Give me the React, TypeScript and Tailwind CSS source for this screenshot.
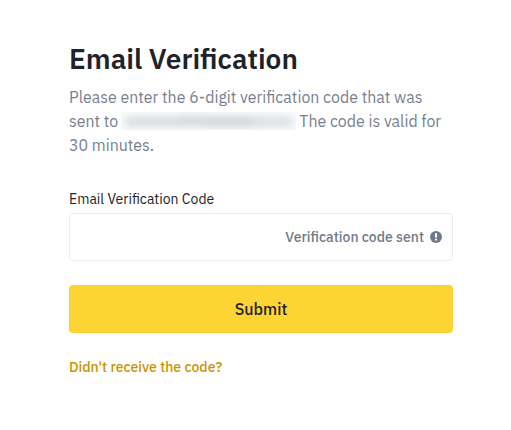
import React from 'react';

/**
 * Sizes and tints of the soft blocks that stand in for the hidden address
 */
const MASK_BLOCKS = [
  'h-[9px] w-[52px] bg-[#d3d6d9]',
  'h-[10px] w-[30px] bg-[#d1d4d8]',
  'h-[11px] w-[44px] bg-[#d0d3d7]',
  'h-[9px] w-[40px] bg-[#d6d9dc]',
];

/**
 * Blurred placeholder shown in place of the account's email address
 */
function MaskedEmail() {
  return (
    <span className="mx-[3px] inline-flex h-[18px] w-[175px] items-center overflow-hidden bg-[#fafbfb]">
      <span className="flex w-full items-center justify-center blur-[4px]">
        {MASK_BLOCKS.map((block) => (
          <span key={block} className={block} />
        ))}
      </span>
    </span>
  );
}

function NoticeIcon() {
  return (
    <svg className="h-3 w-3 shrink-0" viewBox="0 0 12 12" aria-hidden="true">
      <circle cx="6" cy="6" r="6" fill="#707a8a" />
      <path d="M5 2.2h2v4.4H5zM5 7.8h2v1.8H5z" fill="#fff" />
    </svg>
  );
}

export default function App() {
  return (
    <main className="min-h-[430px] bg-white pl-[69px] pt-[41px] font-['IBM_Plex_Sans',Roboto,sans-serif]">
      <form className="flex w-96 flex-col" onSubmit={(event) => event.preventDefault()}>
        <h1 className="whitespace-nowrap text-[28px] font-semibold leading-9 text-[#1e2329]">
          Email Verification
        </h1>

        <p className="mt-2 whitespace-nowrap text-[15.92px] leading-6 text-[#76808f]">
          <span className="block">Please enter the 6-digit verification code that was</span>
          <span className="flex items-center">
            <span>sent to</span>
            <MaskedEmail />
            <span>The code is valid for</span>
          </span>
          <span className="block">30 minutes.</span>
        </p>

        <label htmlFor="code" className="mt-[31px] text-sm leading-[22px] text-[#1e2329]">
          Email Verification Code
        </label>
        <div className="mt-[3px] flex h-12 items-center rounded border border-[#eaecef] pr-[10px]">
          <input id="code" className="h-full min-w-0 flex-1 px-3 outline-none" />
          <span className="mr-[6px] whitespace-nowrap text-sm font-medium text-[#707a8a]">
            Verification code sent
          </span>
          <NoticeIcon />
        </div>

        <button
          type="submit"
          className="mt-6 h-12 rounded bg-[#fcd535] text-base font-medium text-[#1e2329]"
        >
          Submit
        </button>

        <a
          href="#"
          className="mt-[23px] self-start text-sm font-medium leading-[22px] text-[#c99400]"
        >
          Didn't receive the code?
        </a>
      </form>
    </main>
  );
}
